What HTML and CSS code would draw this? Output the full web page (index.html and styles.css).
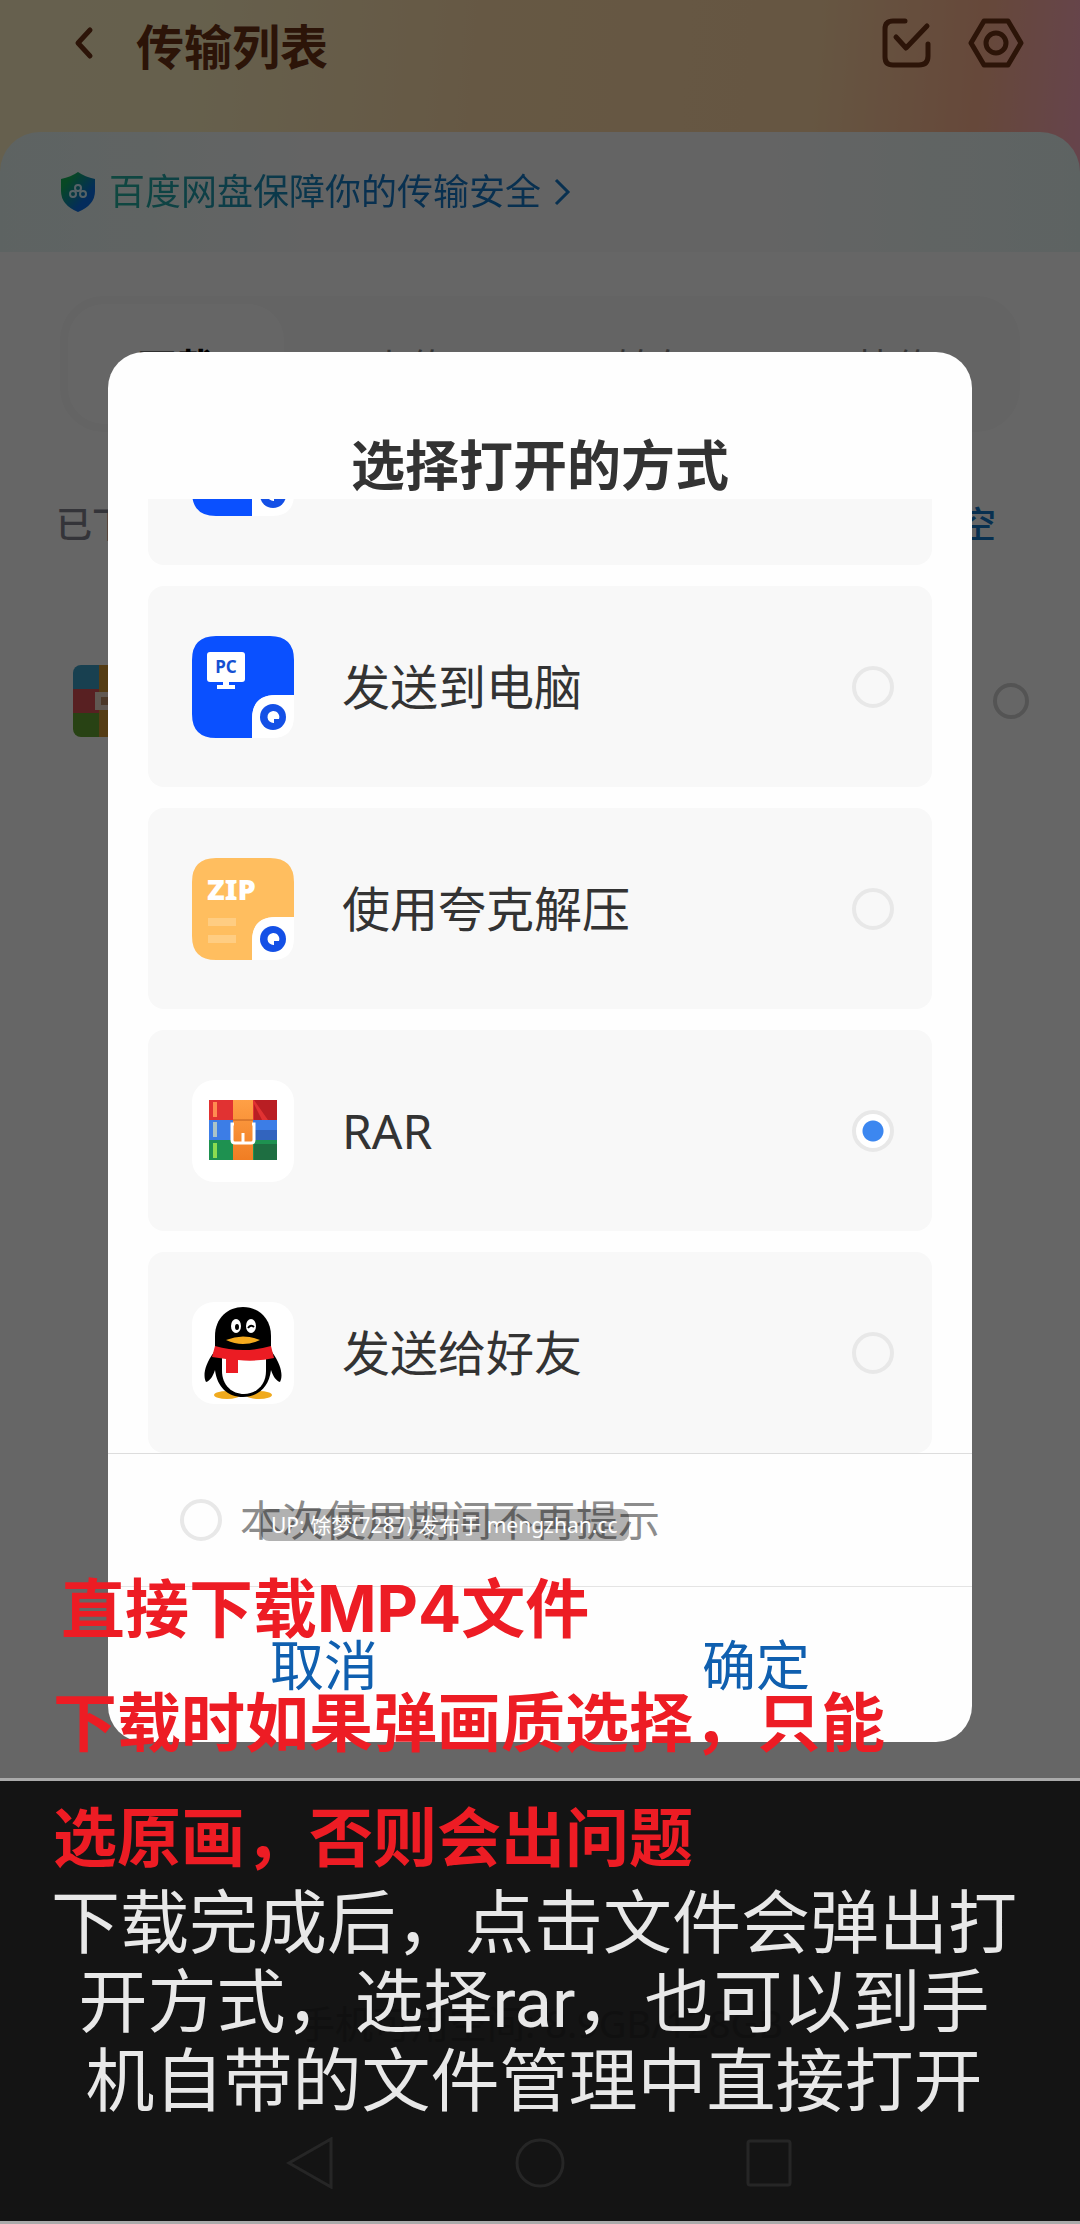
FILE: index.html
```
<!DOCTYPE html>
<html lang="zh-CN">
<head>
    <meta charset="UTF-8">
    <meta name="viewport" content="width=device-width, initial-scale=1.0">
    <title>传输列表</title>
    <link rel="stylesheet" href="styles.css">
</head>
<body>
    <div class="screen">
        <!-- Transfer list page -->
        <div class="app">
            <header class="header">
                <button type="button" class="icon-button back" aria-label="返回">
                    <svg width="24" height="36" viewBox="0 0 24 36"><path d="M18 5 L6 18 L18 31"/></svg>
                </button>
                <h1>传输列表</h1>
                <button type="button" class="icon-button" aria-label="多选">
                    <svg width="52" height="52" viewBox="0 0 52 52"><path d="M23 4 H11 Q3 4 3 12 V40 Q3 48 11 48 H37 Q46 48 46 39 V27"/><path d="M14 20 L24 31 L45 9"/></svg>
                </button>
                <button type="button" class="icon-button" aria-label="设置">
                    <svg width="56" height="52" viewBox="0 0 56 52"><path d="M16 4 H40 L53 26 L40 48 H16 L3 26 Z"/><circle cx="28" cy="26" r="10"/></svg>
                </button>
            </header>

            <a class="notice" href="#">
                <svg class="shield" width="34" height="42" viewBox="0 0 34 42">
                    <defs>
                        <linearGradient id="shieldFill" x1="0" y1="0" x2="1" y2="1">
                            <stop offset="0.2" stop-color="#14b45a"/>
                            <stop offset="0.7" stop-color="#0a6ee6"/>
                        </linearGradient>
                    </defs>
                    <path d="M17 1 Q24 6 34 8 V20 Q34 34 17 41 Q0 34 0 20 V8 Q10 6 17 1 Z" fill="url(#shieldFill)"/>
                    <g fill="none" stroke="#d8f4ff" stroke-width="2">
                        <circle cx="17" cy="17" r="3"/>
                        <circle cx="12" cy="23" r="3"/>
                        <circle cx="22" cy="23" r="3"/>
                    </g>
                </svg>
                <span class="notice-text">百度网盘保障你的传输安全</span>
                <svg class="arrow" width="18" height="28" viewBox="0 0 18 28"><path d="M3 2 L15 14 L3 26"/></svg>
            </a>

            <nav class="tabs">
                <button type="button" class="tab active">下载</button>
                <button type="button" class="tab">上传</button>
                <button type="button" class="tab">转存</button>
                <button type="button" class="tab">快传</button>
            </nav>

            <div class="list-head">
                <span>已下载</span>
                <a href="#">清空</a>
            </div>

            <div class="file">
                <svg width="72" height="72" viewBox="0 0 72 72">
                    <defs><clipPath id="fileClip"><rect width="72" height="72" rx="8"/></clipPath></defs>
                    <g clip-path="url(#fileClip)">
                        <rect width="72" height="24" fill="#3ca0c8"/>
                        <rect y="24" width="72" height="24" fill="#dc5055"/>
                        <rect y="48" width="72" height="24" fill="#64a532"/>
                        <rect x="26" width="20" height="72" fill="#d29632"/>
                        <rect x="22" y="27" width="28" height="18" fill="#f0dccd"/>
                        <rect x="28" y="32" width="16" height="8" fill="#be8c64"/>
                    </g>
                </svg>
                <input type="checkbox" class="round file-check" aria-label="选择文件">
            </div>
        </div>

        <!-- Open-with dialog -->
        <div class="overlay">
            <form class="dialog">
                <h2>选择打开的方式</h2>

                <div class="options">
                    <label class="option">
                        <svg class="app-icon" viewBox="0 0 102 102">
                            <use href="#quarkBase" fill="#0a50ff"/>
                            <use href="#quarkDot"/>
                        </svg>
                        <span></span>
                        <input type="radio" name="app" class="round">
                    </label>
                    <label class="option">
                        <svg class="app-icon" viewBox="0 0 102 102">
                            <defs>
                                <path id="quarkBase" d="M24 0 H78 Q102 0 102 24 V59 H84 Q60 59 60 83 V102 H24 Q0 102 0 78 V24 Q0 0 24 0 Z"/>
                                <g id="quarkDot">
                                    <path d="M102 59 V80 Q102 102 80 102 H60 V83 Q60 59 84 59 Z" fill="#fff"/>
                                    <circle cx="81" cy="81" r="13" fill="#1450e6"/>
                                    <path d="M81 75 A6 6 0 1 0 82 87 L82 83 H87 A6 6 0 0 0 81 75 Z" fill="#fff"/>
                                </g>
                            </defs>
                            <use href="#quarkBase" fill="#0a50ff"/>
                            <rect x="15" y="16" width="38" height="30" rx="3" fill="#fff"/>
                            <path d="M31 46 h6 v3 h6 v4 h-18 v-4 h6 z" fill="#fff"/>
                            <text class="icon-text" x="34" y="37" font-size="17" text-anchor="middle" fill="#1450d2">PC</text>
                            <use href="#quarkDot"/>
                        </svg>
                        <span>发送到电脑</span>
                        <input type="radio" name="app" class="round">
                    </label>
                    <label class="option">
                        <svg class="app-icon" viewBox="0 0 102 102">
                            <use href="#quarkBase" fill="#ffbe5f"/>
                            <text class="icon-text heavy" x="15" y="42" font-size="29" fill="#fff">ZIP</text>
                            <rect x="16" y="60" width="28" height="8" fill="#ffcd82"/>
                            <rect x="16" y="77" width="28" height="8" fill="#ffcd82"/>
                            <use href="#quarkDot"/>
                        </svg>
                        <span>使用夸克解压</span>
                        <input type="radio" name="app" class="round">
                    </label>
                    <label class="option">
                        <svg class="app-icon" viewBox="0 0 102 102">
                            <defs>
                                <linearGradient id="strap" x1="0" y1="0" x2="0" y2="1">
                                    <stop offset="0" stop-color="#ffa046"/>
                                    <stop offset="1" stop-color="#f07d23"/>
                                </linearGradient>
                            </defs>
                            <rect width="102" height="102" rx="22" fill="#fff"/>
                            <rect x="17" y="20" width="68" height="20" fill="#e13232"/>
                            <rect x="17" y="40" width="68" height="20" fill="#3c7de6"/>
                            <rect x="17" y="60" width="68" height="20" fill="#1e9150"/>
                            <path d="M62 24 L70 40 H62 Z M62 20 H85 V40 H76 Z" fill="#b91e23"/>
                            <rect x="62" y="50" width="23" height="10" fill="#3264be"/>
                            <rect x="62" y="64" width="23" height="16" fill="#1e6e41"/>
                            <rect x="21" y="22" width="4" height="15" fill="#ff8c50"/>
                            <rect x="21" y="42" width="4" height="15" fill="#aac3c8"/>
                            <rect x="21" y="63" width="4" height="15" fill="#8cdc50"/>
                            <rect x="41" y="20" width="20" height="60" fill="url(#strap)"/>
                            <path d="M41 40 H61" stroke="#be5f1e" stroke-width="1"/>
                            <path d="M42 44 H40 V60 Q40 63 43 63 H59 Q62 63 62 60 V44 H60" fill="none" stroke="#fff" stroke-width="3"/>
                            <path d="M51 53 V62" stroke="#fff" stroke-width="3"/>
                        </svg>
                        <span>RAR</span>
                        <input type="radio" name="app" class="round" checked>
                    </label>
                    <label class="option">
                        <svg class="app-icon" viewBox="0 0 102 102">
                            <rect width="102" height="102" rx="22" fill="#fff"/>
                            <ellipse cx="35" cy="93" rx="13" ry="4" fill="#f0aa1e"/>
                            <ellipse cx="67" cy="93" rx="13" ry="4" fill="#f0aa1e"/>
                            <path d="M22 50 C12 64 11 74 14 80 C18 79 21 74 23 68 C25 85 36 95 51 95 C66 95 77 85 79 68 C81 74 84 79 88 80 C91 74 90 64 80 50 Z" fill="#000"/>
                            <path d="M23 48 V34 C23 16 36 5 51 5 C66 5 79 16 79 34 V48 Z" fill="#000"/>
                            <path d="M30 55 H74 V69 C74 83 64 92 52 92 C40 92 30 83 30 69 Z" fill="#fff"/>
                            <path d="M23 44 Q51 52 79 44 L82 56 Q64 60 46 58 V71 H34 V57 L20 55 Z" fill="#eb1c23"/>
                            <ellipse cx="44" cy="24" rx="5" ry="7" fill="#fff"/>
                            <ellipse cx="59" cy="24" rx="5" ry="7" fill="#fff"/>
                            <ellipse cx="45" cy="25" rx="2" ry="3" fill="#000"/>
                            <path d="M56 26 Q59 22 62 25" fill="none" stroke="#000" stroke-width="2"/>
                            <path d="M34 38 Q51 31 68 38 Q51 46 34 38 Z" fill="#f5aa1e"/>
                        </svg>
                        <span>发送给好友</span>
                        <input type="radio" name="app" class="round">
                    </label>
                </div>

                <label class="remember">
                    <input type="checkbox" class="round">
                    <span>本次使用期间不再提示</span>
                </label>

                <div class="actions">
                    <button type="button">取消</button>
                    <button type="button">确定</button>
                </div>
            </form>
        </div>

        <div class="watermark">UP: 馀梦(7287) 发布于 mengzhan.cc</div>

        <!-- Tutorial captions -->
        <div class="captions">
            <div class="warning">
                <p class="lead">直接下载MP4文件</p>
                <p>下载时如果弹画质选择，只能</p>
            </div>
            <div class="panel">
                <p class="warning-text">选原画，否则会出问题</p>
                <div class="guide">
                    <p class="storage">手机可用空间: 8.9GB/128GB</p>
                    <p class="guide-text">下载完成后，点击文件会弹出打<br>开方式，选择rar，也可以到手<br>机自带的文件管理中直接打开</p>
                </div>
                <div class="navbar">
                    <button type="button" aria-label="后退"><svg width="52" height="52" viewBox="0 0 52 52"><path d="M46 2 V50 L4 26 Z"/></svg></button>
                    <button type="button" aria-label="主页"><svg width="52" height="52" viewBox="0 0 52 52"><circle cx="26" cy="26" r="23"/></svg></button>
                    <button type="button" aria-label="最近任务"><svg width="52" height="52" viewBox="0 0 52 52"><rect x="5" y="4" width="42" height="44" rx="2"/></svg></button>
                </div>
            </div>
        </div>
    </div>
</body>
</html>
```
FILE: styles.css
```
* {
    box-sizing: border-box;
}

body {
    margin: 0;
    background: #666;
    color: #333;
    font-family: "Noto Sans", "Noto Sans CJK SC", sans-serif;
}

h1, h2, p {
    margin: 0;
}

button {
    border: none;
    background: none;
    padding: 0;
    font-family: inherit;
    cursor: pointer;
}

a {
    text-decoration: none;
}

svg {
    display: block;
    flex: none;
}

.screen {
    position: relative;
    display: flex;
    flex-direction: column;
    min-height: 100vh;
    overflow: hidden;
}

/* Transfer list page */
.app {
    flex: 1;
    background: linear-gradient(95deg, #fff0c3 0%, #fff0c0 18%, #ffdcaa 45%, #ffd7a5 75%, #ffb491 90%, #ffaabe 100%) no-repeat #fff;
    background-size: 100% 180px;
}

.header {
    display: flex;
    align-items: center;
    height: 132px;
    padding: 0 56px 46px 72px;
}

.header h1 {
    flex: 1;
    font-size: 48px;
    line-height: 48px;
    padding: 8px 0 0 40px;
    color: #6e3214;
}

.icon-button {
    margin-left: 34px;
}

.icon-button.back {
    margin-left: 0;
}

.icon-button svg {
    fill: none;
    stroke: #6e3214;
    stroke-width: 5;
    stroke-linecap: round;
    stroke-linejoin: round;
}

.notice {
    display: flex;
    align-items: center;
    height: 120px;
    padding: 0 61px;
    border-radius: 40px 40px 0 0;
    background: linear-gradient(90deg, #e9f8f6, #fafafa 30%, #fafafa 70%, #e9f8f6);
}

.notice-text {
    margin: 0 12px 0 14px;
    font-size: 36px;
    line-height: 48px;
    background: linear-gradient(90deg, #28b4a0, #1478c8 60%);
    -webkit-background-clip: text;
    background-clip: text;
    color: transparent;
}

.arrow {
    fill: none;
    stroke: #1478c8;
    stroke-width: 3;
}

.tabs {
    display: grid;
    grid-template-columns: 216px repeat(3, 1fr);
    gap: 8px;
    height: 136px;
    margin: 44px 60px 0;
    padding: 8px;
    border-radius: 44px;
    background: #fafafa;
}

.tab {
    border-radius: 36px;
    font-size: 38px;
    color: #888;
}

.tab.active {
    background: #fff;
    color: #000;
    font-weight: bold;
}

.list-head {
    display: flex;
    justify-content: space-between;
    margin-top: 69px;
    padding: 0 84px 0 56px;
    font-size: 36px;
    font-weight: 500;
    line-height: 48px;
    color: #82828f;
}

.list-head a {
    color: #1478c8;
}

.file {
    display: flex;
    align-items: center;
    justify-content: space-between;
    margin-top: 116px;
    padding: 0 51px 0 73px;
}

/* Round radios and tick boxes */
.round {
    appearance: none;
    flex: none;
    width: 42px;
    height: 42px;
    margin: 0;
    border: 4px solid #e8e8e8;
    border-radius: 50%;
}

.round:checked {
    background: radial-gradient(circle, #3c87f0 0 10px, #fff 11px);
}

.file-check {
    width: 36px;
    height: 36px;
    border: 4px solid #d2d2d2;
}

/* Dialog */
.overlay {
    position: absolute;
    top: 0;
    right: 0;
    bottom: 0;
    left: 0;
    padding-top: 352px;
    background: rgba(0, 0, 0, 0.6);
}

.dialog {
    width: 80%;
    margin: 0 auto;
    border-radius: 36px;
    background: #fefefe;
    overflow: hidden;
}

.dialog h2 {
    padding-top: 80px;
    font-size: 54px;
    line-height: 67px;
    text-align: center;
}

.options {
    display: flex;
    flex-direction: column;
    justify-content: flex-end;
    gap: 21px;
    height: 954px;
    padding: 0 40px;
    overflow: hidden;
}

.option {
    display: flex;
    flex: none;
    align-items: center;
    gap: 48px;
    height: 201px;
    padding: 0 38px 0 44px;
    border-radius: 16px;
    background: #f8f8f8;
    font-size: 48px;
    line-height: 64px;
}

.option span {
    flex: 1;
}

.app-icon {
    width: 102px;
    height: 102px;
}

.icon-text {
    font-family: "Noto Sans", sans-serif;
    font-weight: bold;
}

.icon-text.heavy {
    font-weight: 900;
}

.remember {
    display: flex;
    align-items: center;
    gap: 18px;
    height: 133px;
    padding: 0 72px;
    border-top: 1px solid #ddd;
    font-size: 42px;
    line-height: 64px;
    color: #8c8c8c;
}

.actions {
    display: flex;
    height: 156px;
    border-top: 1px solid #e4e4e4;
}

.actions button {
    flex: 1;
    padding-bottom: 4px;
    font-size: 54px;
    color: #0f5faf;
}

.watermark {
    position: absolute;
    top: 1509px;
    left: 261px;
    padding: 0 12px 0 10px;
    border-radius: 8px;
    background: rgba(0, 0, 0, 0.3);
    color: #fff;
    font-size: 21px;
    line-height: 32px;
}

/* Captions drawn over the screen */
.captions {
    position: absolute;
    right: 0;
    bottom: 0;
    left: 0;
}

.warning, .warning-text {
    padding-left: 53px;
    color: #ed1c24;
    font-size: 64px;
    font-weight: bold;
}

.warning {
    line-height: 113px;
}

.warning-text {
    line-height: 96px;
}

.lead {
    padding-left: 8px;
    font-family: Inter, "Noto Sans CJK SC", sans-serif;
}

.panel {
    padding-top: 8px;
    border-top: 3px solid #aaa;
    border-bottom: 3px solid #aaa;
    background: #141414;
}

.guide {
    position: relative;
}

.guide-text {
    position: relative;
    padding-right: 12px;
    color: #e8e8e8;
    font-family: Roboto, "Noto Sans CJK SC", sans-serif;
    font-size: 69px;
    line-height: 79px;
    text-align: center;
}

.storage {
    position: absolute;
    top: 114px;
    right: 0;
    left: 0;
    color: #101010;
    font-size: 38px;
    line-height: 48px;
    text-align: center;
}

.navbar {
    display: flex;
    justify-content: center;
    gap: 177px;
    padding: 15px 0 32px;
}

.navbar svg {
    fill: none;
    stroke: #262626;
    stroke-width: 3;
}
```
